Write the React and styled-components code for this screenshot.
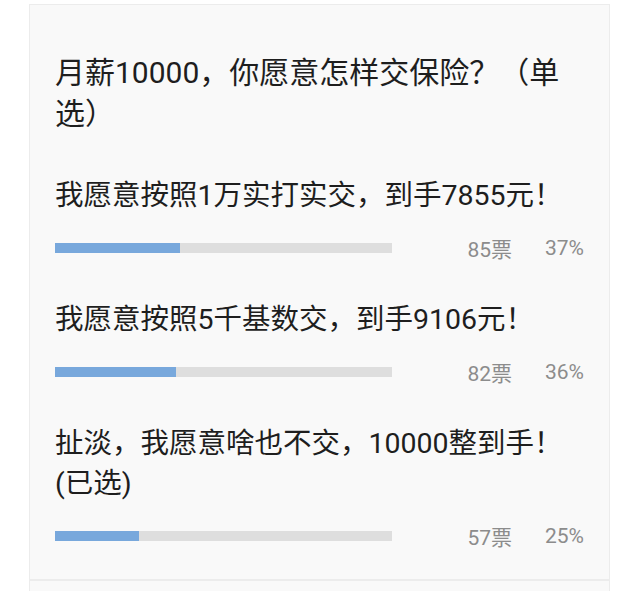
import React from "react";
import styled, { createGlobalStyle } from "styled-components";

const Global = createGlobalStyle`
  html, body {
    margin: 0;
    padding: 0;
    background: #ffffff;
  }
  body {
    font-family: Roboto, "Noto Sans CJK SC", sans-serif;
    -webkit-font-smoothing: antialiased;
  }
`;

const Page = styled.div`
  padding: 4px 30px 0 29px;
`;

const Card = styled.div`
  background: #f9f9f9;
  border: 1px solid #ececec;
  border-bottom: none;
  padding: 0 25px;
  min-height: 587px;
  box-sizing: border-box;
`;

const Title = styled.h1`
  margin: 0;
  padding-top: 47px;
  font-size: 30px;
  font-weight: 400;
  line-height: 41px;
  color: #1e1e1e;
`;

const OptionList = styled.div`
  display: flex;
  flex-direction: column;
  gap: 37px;
  margin: 0 -25px;
  padding: 42px 25px 28px;
  border-bottom: 2px solid #ececec;
`;

const Option = styled.div`
  display: flex;
  flex-direction: column;
  gap: 17px;
`;

const OptionText = styled.div`
  font-size: 28.5px;
  line-height: 40px;
  color: #1e1e1e;
`;

const StatRow = styled.div`
  display: flex;
  align-items: center;
  height: 30px;
`;

const Track = styled.div`
  width: 337px;
  height: 10px;
  background: #dedede;
  display: flex;
`;

const Fill = styled.div`
  height: 100%;
  background: #78a8dc;
`;

const Votes = styled.span`
  margin-left: auto;
  width: 60px;
  text-align: right;
  font-size: 21px;
  color: #8c8c8c;
`;

const Percent = styled.span`
  width: 60px;
  margin-left: 12px;
  text-align: right;
  font-size: 21px;
  color: #8c8c8c;
`;

const options = [
  { text: "我愿意按照1万实打实交，到手7855元！", votes: 85, pct: 37 },
  { text: "我愿意按照5千基数交，到手9106元！", votes: 82, pct: 36 },
  { text: "扯淡，我愿意啥也不交，10000整到手！(已选)", votes: 57, pct: 25 },
];

export default function App() {
  return (
    <>
      <Global />
      <Page>
        <Card>
          <Title>月薪10000，你愿意怎样交保险？（单选）</Title>
          <OptionList>
            {options.map((o) => (
              <Option key={o.text}>
                <OptionText>{o.text}</OptionText>
                <StatRow>
                  <Track>
                    <Fill style={{ width: `${o.pct}%` }} />
                  </Track>
                  <Votes>{o.votes}票</Votes>
                  <Percent>{o.pct}%</Percent>
                </StatRow>
              </Option>
            ))}
          </OptionList>
        </Card>
      </Page>
    </>
  );
}
